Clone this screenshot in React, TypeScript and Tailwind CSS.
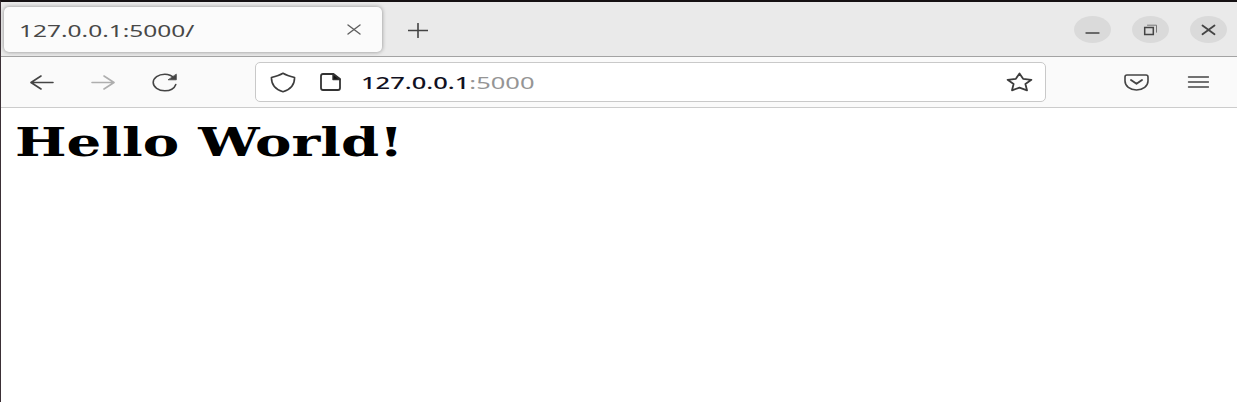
import type { ReactNode } from "react";

type IconProps = { w: number; h: number; className: string; children: ReactNode };

function Icon({ w, h, className, children }: IconProps) {
  return (
    <svg
      width={w}
      height={h}
      viewBox={`0 0 ${w} ${h}`}
      fill="none"
      stroke="currentColor"
      strokeWidth="1.6"
      strokeLinecap="round"
      strokeLinejoin="round"
      className={`shrink-0 ${className}`}
    >
      {children}
    </svg>
  );
}

function TabStrip() {
  return (
    <div className="flex h-[54px] items-center bg-[#eaeaea] pl-[3px] pr-[10px]">
      <div className="flex h-[45px] w-[378px] shrink-0 items-center justify-between rounded-[5px] bg-[#fbfbfb] pl-[15px] pr-[21px] shadow-[0_0_4px_rgba(0,0,0,0.4)]">
        <span className="origin-left scale-x-[1.44] whitespace-nowrap pt-[3px] text-[17px] leading-none text-[#484848]">
          127.0.0.1:5000/
        </span>
        <Icon w={14} h={11} className="mt-px text-[#606060]">
          <path d="M1 1 13 10M13 1 1 10" strokeWidth="1.4" />
        </Icon>
      </div>
      <Icon w={20} h={15} className="ml-[26px] mt-[2px] text-[#444444]">
        <path d="M.5 7.5h19M10 .5v14" strokeWidth="1.6" />
      </Icon>
      <div className="ml-auto flex gap-[21px]">
        <Icon w={37} h={27} className="text-[#444444]">
          <ellipse cx="18.5" cy="13.5" rx="18.5" ry="13.5" fill="#dadada" stroke="none" />
          <path d="M12 17h13" strokeWidth="1.3" />
        </Icon>
        <Icon w={37} h={27} className="text-[#444444]">
          <ellipse cx="18.5" cy="13.5" rx="18.5" ry="13.5" fill="#dadada" stroke="none" />
          <path d="M12.7 11.5h8.6v7h-8.6z" strokeWidth="1.5" strokeLinejoin="miter" />
          <path d="M15.5 9.2h9v7" strokeWidth="1" strokeLinejoin="miter" stroke="#777777" />
        </Icon>
        <Icon w={37} h={27} className="text-[#444444]">
          <ellipse cx="18.5" cy="13.5" rx="18.5" ry="13.5" fill="#dadada" stroke="none" />
          <path d="m12.5 9.5 12 8.8m0-8.8-12 8.8" strokeWidth="1.8" />
        </Icon>
      </div>
    </div>
  );
}

function AddressBar() {
  return (
    <div className="flex h-[40px] w-[791px] shrink-0 items-center rounded-[5px] border-[1.5px] border-[#c9c9c9] bg-white pl-[14px] pr-[12px]">
      <Icon w={26} h={21} className="text-[#3c3c3c]">
        <path d="M13 1.2C9.5 3.2 5.5 4.4 1.4 5.5C1.4 12 5 17.400 13 19.700C21 17.400 24.600 12 24.600 5.500 20.500 4.400 16.500 3.200 13 1.200Z" />
      </Icon>
      <Icon w={21} h={18} className="ml-[24px] text-[#333333]">
        <path d="M3 1h10.500l6.500 5V15q0 2-2 2H3q-2 0-2-2V3Q1 1 3 1Z" strokeWidth="1.800" />
        <path d="M13 1v5.500H20Z" fill="#111111" strokeWidth="1.400" />
      </Icon>
      <div className="ml-[20px] origin-left scale-x-[1.5] whitespace-nowrap text-[17px] leading-none text-[#959595]">
        <span className="font-medium text-[#111122]">127.0.0.1</span>:5000
      </div>
      <Icon w={27} h={20} className="ml-auto text-[#3c3c3c]">
        <path d="m13.500 1.500 3.600 5.300 8.300 1-6 4.200 1.600 6.300-7.500-2.700-7.500 2.700 1.600-6.300-6-4.200 8.300-1Z" strokeWidth="1.800" />
      </Icon>
    </div>
  );
}

function Toolbar() {
  return (
    <div className="flex h-[52px] items-center border-y border-t-[#a3a3a3] border-b-[#cccccc] bg-[#fafafa]">
      <Icon w={24} h={15} className="ml-[29px] mt-px text-[#444444]">
        <path d="M23 7.500H1M11 1 1 7.500 11 14" />
      </Icon>
      <Icon w={24} h={15} className="ml-[37px] mt-px text-[#aeaeae]">
        <path d="M1 7.500h22M13 1l10 6.500L13 14" />
      </Icon>
      <Icon w={26} h={19} className="ml-[37px] mt-px text-[#444444]">
        <path d="M22 5C20 2.700 16.600 1.200 12.800 1.200 6.400 1.200 1.200 4.900 1.200 9.500S6.400 17.800 12.800 17.800c5.400 0 9.700-2.700 11-6.300" />
        <path d="M24.300 1.500v5.300h-7.800Z" fill="currentColor" strokeWidth=".8" />
      </Icon>
      <div className="ml-[77px]">
        <AddressBar />
      </div>
      <Icon w={25} h={17} className="ml-[78px] text-[#444444]">
        <path d="M3 1h19q2 0 2 2v4C24 12 19 16 12.500 16S1 12 1 7V3q0-2 2-2Z" />
        <path d="m7 6 5.500 3.800L18 6" strokeWidth="1.900" />
      </Icon>
      <Icon w={22} h={14} className="ml-[38px] text-[#444444]">
        <path d="M1.500 2h20M1.500 7h20M1.500 12h20" strokeWidth="1.400" />
      </Icon>
    </div>
  );
}

export default function App() {
  return (
    <div className="flex h-[402px] w-[1237px] flex-col overflow-hidden border-l border-t-2 border-l-[#3b3036] border-t-[#151113] bg-white font-['Noto_Sans',sans-serif]">
      <TabStrip />
      <Toolbar />
      <main className="pl-[14px] pt-[16px]">
        <h1 className="w-max origin-left scale-x-[1.418] whitespace-nowrap font-['DejaVu_Serif',serif] text-[38.5px] font-bold leading-[38px] text-black">
          Hello World!
        </h1>
      </main>
    </div>
  );
}
